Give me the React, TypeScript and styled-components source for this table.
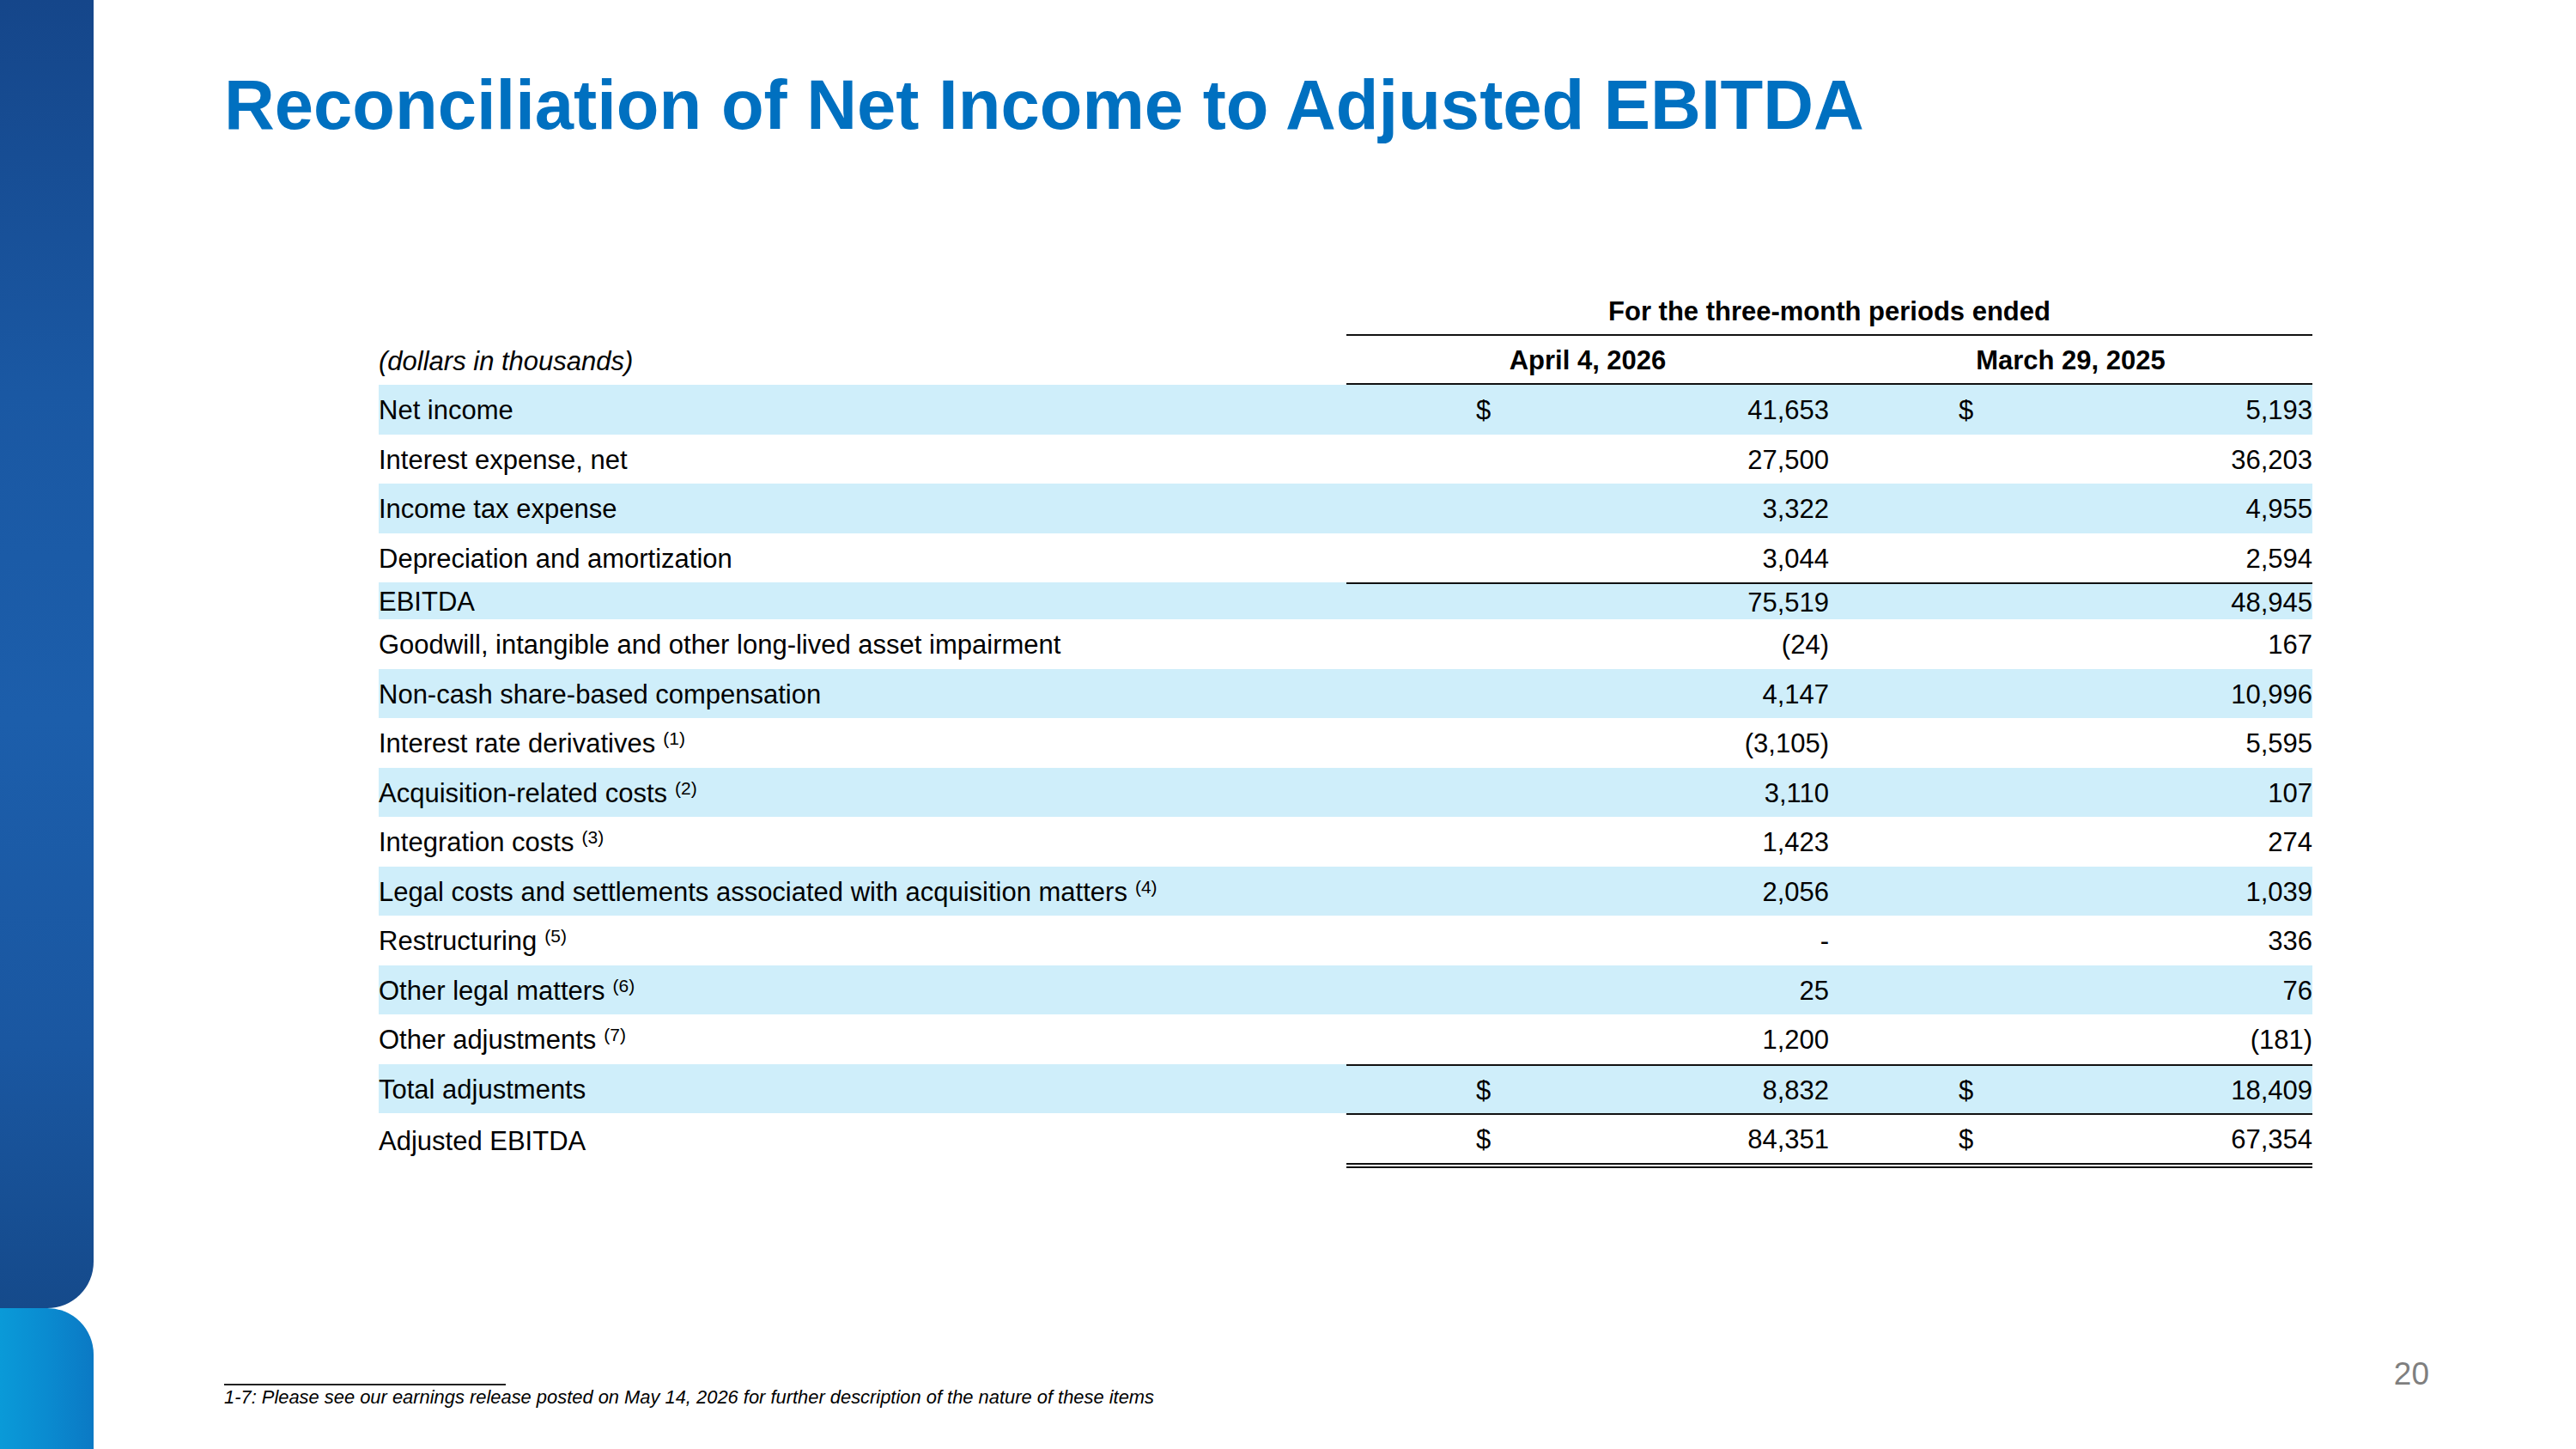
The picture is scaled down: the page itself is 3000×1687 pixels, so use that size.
import React from 'react';
import styled, { createGlobalStyle } from 'styled-components';

const GlobalStyle = createGlobalStyle`
  html, body {
    margin: 0;
    padding: 0;
    background: #ffffff;
  }
  body {
    font-family: 'Liberation Sans', Arial, sans-serif;
    color: #000000;
  }
`;

const Slide = styled.div`
  width: 3000px;
  height: 1687px;
  display: flex;
  overflow: hidden;
  background: #ffffff;
`;

const Sidebar = styled.aside`
  width: 109px;
  flex-shrink: 0;
  display: flex;
  flex-direction: column;
`;

const SidebarTop = styled.div`
  flex: 0 0 1523px;
  border-bottom-right-radius: 54px;
  background: linear-gradient(180deg, #15468a 0%, #1a58a3 30%, #1c5eab 55%, #1a57a1 80%, #154a8b 100%);
`;

const SidebarBottom = styled.div`
  flex: 1;
  border-top-right-radius: 54px;
  background: linear-gradient(90deg, #0a9ad8 0%, #0a8bd0 50%, #0b79c4 100%);
`;

const Main = styled.main`
  flex: 1;
  display: flex;
  flex-direction: column;
  padding: 81px 171px 48px 152px;
`;

const Title = styled.h1`
  margin: 0;
  font-size: 81.4px;
  line-height: 81px;
  font-weight: 700;
  color: #0070c0;
  white-space: nowrap;
`;

const Table = styled.div`
  margin: 172px 0 0 180px;
  width: 2252px;
  display: flex;
  flex-direction: column;
  font-size: 31px;
`;

const Row = styled.div<{ $shaded?: boolean; $height?: number }>`
  display: grid;
  grid-template-columns: 1127px 562px 563px;
  height: ${(p) => p.$height ?? 57.5}px;
  background: ${(p) => (p.$shaded ? '#cfeefa' : 'transparent')};
`;

const Label = styled.div<{ $italic?: boolean }>`
  box-sizing: border-box;
  padding-top: 3px;
  display: flex;
  align-items: center;
  white-space: nowrap;
  font-style: ${(p) => (p.$italic ? 'italic' : 'normal')};
`;

const Note = styled.sup`
  font-size: 21px;
  vertical-align: 9px;
  line-height: 0;
  margin-left: 9px;
`;

const HeadCell = styled.div<{ $span?: boolean }>`
  grid-column: ${(p) => (p.$span ? '2 / span 2' : 'auto')};
  box-sizing: border-box;
  padding-top: 3px;
  display: flex;
  align-items: center;
  justify-content: center;
  font-weight: 700;
  white-space: nowrap;
  border-bottom: 2px solid #111111;
`;

const AmountCell = styled.div<{ $ruleTop?: boolean; $double?: boolean }>`
  box-sizing: border-box;
  padding-top: 3px;
  display: flex;
  align-items: center;
  border-top: ${(p) => (p.$ruleTop ? '2px solid #111111' : 'none')};
  border-bottom: ${(p) => (p.$double ? '6px double #111111' : 'none')};
`;

const Dollar = styled.span`
  margin-left: 151px;
`;

const Figure = styled.span`
  flex: 1;
  text-align: right;
`;

const Footer = styled.footer`
  margin-top: auto;
  display: flex;
  align-items: flex-end;
  justify-content: space-between;
`;

const Footnote = styled.div`
  display: flex;
  flex-direction: column;
`;

const FootRule = styled.div`
  width: 328px;
  border-top: 2px solid #222222;
`;

const FootText = styled.p`
  margin: 2px 0 0;
  font-size: 21.9px;
  line-height: 24px;
  font-style: italic;
  white-space: nowrap;
`;

const PageNumber = styled.div`
  font-size: 37px;
  line-height: 37px;
  color: #7f7f7f;
  margin-bottom: 21px;
`;

interface Line {
  label: string;
  note?: number;
  a: string;
  b: string;
  dollar?: boolean;
  ruleTop?: boolean;
  double?: boolean;
  height?: number;
}

const lines: Line[] = [
  { label: 'Net income', a: '41,653', b: '5,193', dollar: true },
  { label: 'Interest expense, net', a: '27,500', b: '36,203' },
  { label: 'Income tax expense', a: '3,322', b: '4,955' },
  { label: 'Depreciation and amortization', a: '3,044', b: '2,594' },
  { label: 'EBITDA', a: '75,519', b: '48,945', ruleTop: true, height: 43 },
  { label: 'Goodwill, intangible and other long-lived asset impairment', a: '(24)', b: '167' },
  { label: 'Non-cash share-based compensation', a: '4,147', b: '10,996' },
  { label: 'Interest rate derivatives', note: 1, a: '(3,105)', b: '5,595' },
  { label: 'Acquisition-related costs', note: 2, a: '3,110', b: '107' },
  { label: 'Integration costs', note: 3, a: '1,423', b: '274' },
  { label: 'Legal costs and settlements associated with acquisition matters', note: 4, a: '2,056', b: '1,039' },
  { label: 'Restructuring', note: 5, a: '-', b: '336' },
  { label: 'Other legal matters', note: 6, a: '25', b: '76' },
  { label: 'Other adjustments', note: 7, a: '1,200', b: '(181)' },
  { label: 'Total adjustments', a: '8,832', b: '18,409', dollar: true, ruleTop: true },
  { label: 'Adjusted EBITDA', a: '84,351', b: '67,354', dollar: true, ruleTop: true, double: true, height: 63.5 },
];

const Amount: React.FC<{ value: string; line: Line }> = ({ value, line }) => (
  <AmountCell $ruleTop={line.ruleTop} $double={line.double}>
    {line.dollar && <Dollar>$</Dollar>}
    <Figure>{value}</Figure>
  </AmountCell>
);

const App: React.FC = () => {
  return (
    <>
      <GlobalStyle />
      <Slide>
        <Sidebar>
          <SidebarTop />
          <SidebarBottom />
        </Sidebar>
        <Main>
          <Title>Reconciliation of Net Income to Adjusted EBITDA</Title>
          <Table>
            <Row $height={57}>
              <Label />
              <HeadCell $span>For the three-month periods ended</HeadCell>
            </Row>
            <Row $height={57}>
              <Label $italic>(dollars in thousands)</Label>
              <HeadCell>April 4, 2026</HeadCell>
              <HeadCell>March 29, 2025</HeadCell>
            </Row>
            {lines.map((line, i) => (
              <Row key={line.label} $shaded={i % 2 === 0} $height={line.height}>
                <Label>
                  <span>
                    {line.label}
                    {line.note && <Note>({line.note})</Note>}
                  </span>
                </Label>
                <Amount value={line.a} line={line} />
                <Amount value={line.b} line={line} />
              </Row>
            ))}
          </Table>
          <Footer>
            <Footnote>
              <FootRule />
              <FootText>
                1-7: Please see our earnings release posted on May 14, 2026 for further description of the nature of these items
              </FootText>
            </Footnote>
            <PageNumber>20</PageNumber>
          </Footer>
        </Main>
      </Slide>
    </>
  );
};

export default App;
